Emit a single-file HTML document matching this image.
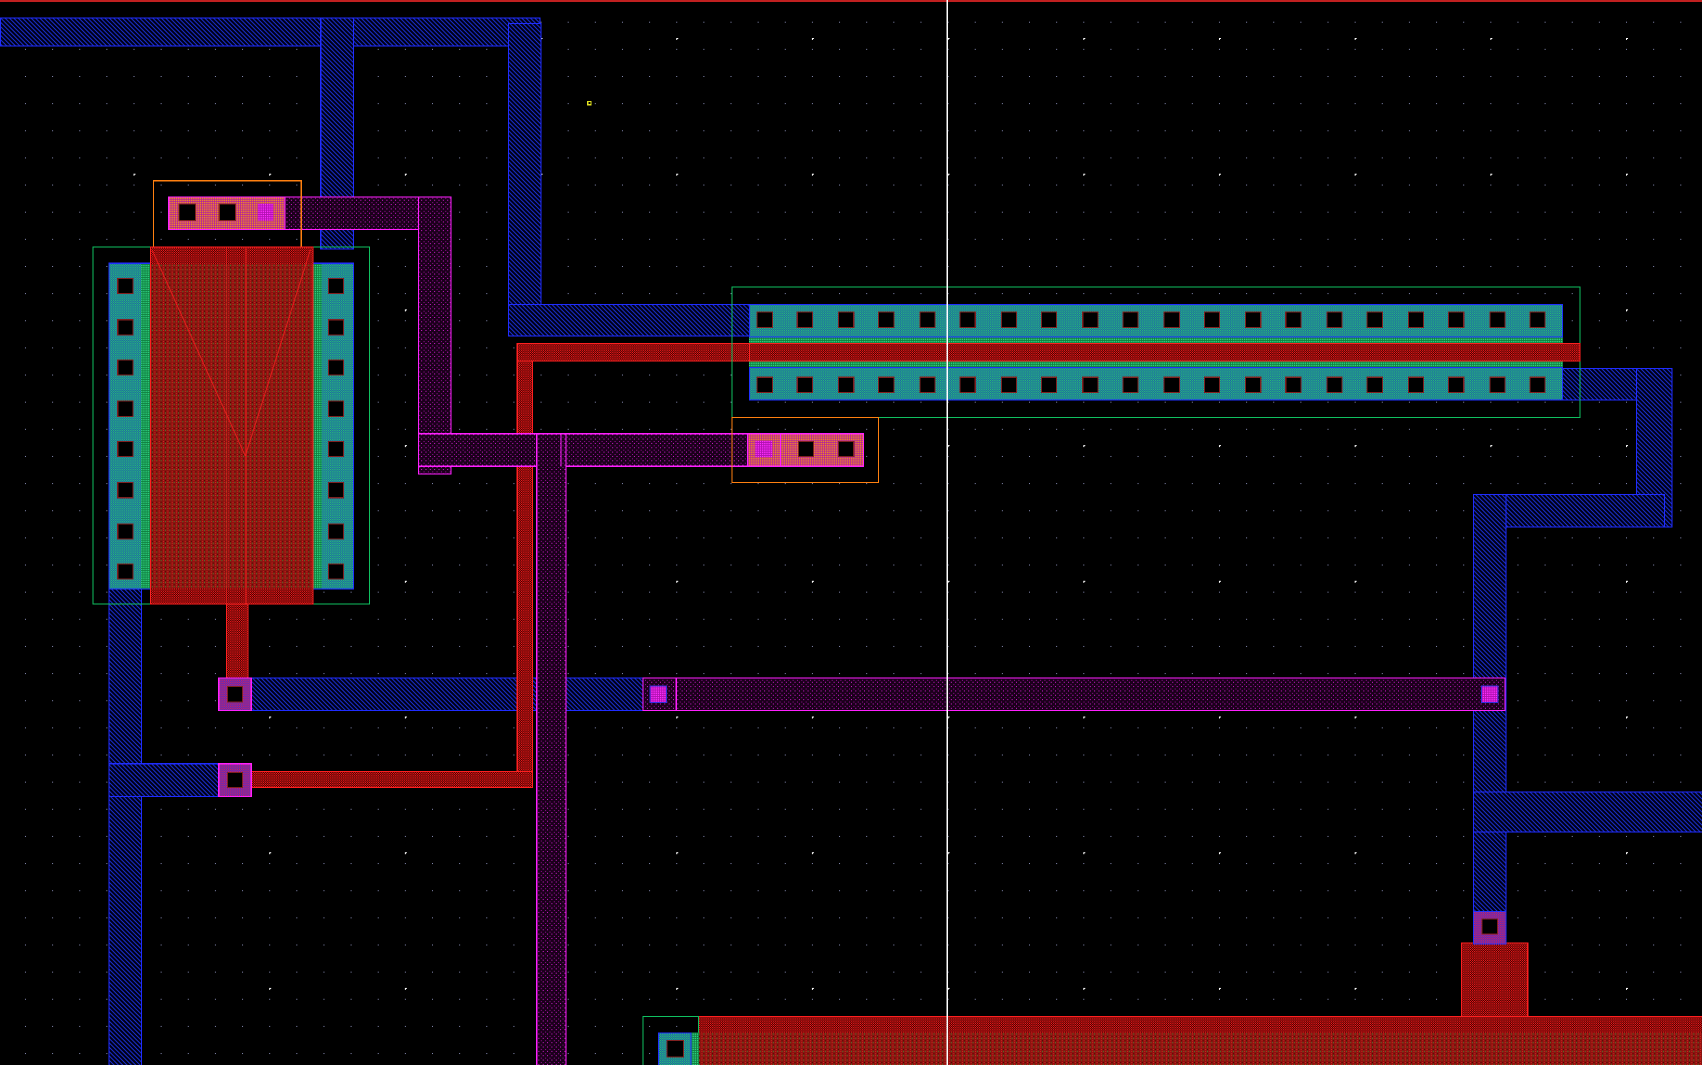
<!DOCTYPE html>
<html><head><meta charset="utf-8"><style>
html,body{margin:0;padding:0;background:#000;overflow:hidden}
svg{display:block}
</style></head><body>
<svg width="1702" height="1065" viewBox="0 0 1568 981" preserveAspectRatio="none" xmlns="http://www.w3.org/2000/svg" shape-rendering="crispEdges">
<defs>
<pattern id="dots" width="25" height="25" patternUnits="userSpaceOnUse" x="-2" y="-5"><rect x="0" y="0" width="1" height="1" fill="#8a8fb8"/></pattern>
<pattern id="bigdots" width="125" height="125" patternUnits="userSpaceOnUse" x="-2" y="-90"><rect x="-1" y="0" width="3" height="1" fill="#fff"/><rect x="0" y="-1" width="1" height="3" fill="#fff"/></pattern>
<pattern id="m1" width="4" height="4" patternUnits="userSpaceOnUse"><rect width="4" height="4" fill="#000015"/><path d="M0 0L4 4M-1 3L1 5M3 -1L5 1" stroke="#1a2fd0" stroke-width="1.2"/></pattern>
<pattern id="poly" width="2" height="2" patternUnits="userSpaceOnUse"><rect width="2" height="2" fill="#300000"/><rect width="1" height="1" fill="#f01818"/><rect x="1" y="1" width="1" height="1" fill="#f01818"/></pattern>
<pattern id="polyg" width="4" height="4" patternUnits="userSpaceOnUse"><rect width="4" height="4" fill="#8a1410"/><rect width="1" height="1" fill="#3a8a30"/><rect x="2" y="2" width="1" height="1" fill="#e02020"/><rect x="2" y="0" width="1" height="1" fill="#e02020"/><rect x="0" y="2" width="1" height="1" fill="#3a1000"/></pattern>
<pattern id="m2" width="4" height="4" patternUnits="userSpaceOnUse"><rect width="4" height="4" fill="#1a001a"/><rect width="1" height="1" fill="#e020e0"/><rect x="2" y="2" width="1" height="1" fill="#a010a0"/></pattern>
<pattern id="act" width="2" height="2" patternUnits="userSpaceOnUse"><rect width="2" height="2" fill="#1a58b0"/><rect width="1" height="1" fill="#28c070"/><rect x="1" y="1" width="1" height="1" fill="#28c070"/></pattern>
<pattern id="grn" width="2" height="2" patternUnits="userSpaceOnUse"><rect width="2" height="2" fill="#108040"/><rect width="1" height="1" fill="#30d080"/></pattern>
<pattern id="pc" width="2" height="2" patternUnits="userSpaceOnUse"><rect width="2" height="2" fill="#c02890"/><rect width="1" height="1" fill="#f09020"/><rect x="1" y="1" width="1" height="1" fill="#b03090"/></pattern>
<pattern id="via" width="2" height="2" patternUnits="userSpaceOnUse"><rect width="2" height="2" fill="#3030e0"/><rect width="1" height="1" fill="#e02050"/><rect x="1" y="1" width="1" height="1" fill="#e02050"/></pattern>
<pattern id="mv" width="2" height="2" patternUnits="userSpaceOnUse"><rect width="2" height="2" fill="#b010b0"/><rect width="1" height="1" fill="#ff30ff"/></pattern>
</defs>
<rect width="1568" height="981" fill="#000"/>
<rect width="1568" height="981" fill="url(#dots)"/>
<rect width="1568" height="981" fill="url(#bigdots)"/>
<rect x="0" y="0" width="1568" height="2" fill="#c02020"/>

<g stroke="#1f2cff" stroke-width="1" fill="url(#m1)">
<rect x="0.5" y="16.5" width="497" height="26"/>
<rect x="295.5" y="16.5" width="30" height="213"/>
<rect x="468.5" y="21.5" width="30" height="288"/>
<rect x="468.5" y="280.5" width="222" height="29"/>
<rect x="100.5" y="542.5" width="30" height="440"/>
<rect x="100.5" y="703.5" width="131" height="30"/>
<rect x="201.5" y="624.5" width="421" height="30"/>
<rect x="1439.5" y="339.5" width="101" height="29"/>
<rect x="1507.5" y="339.5" width="33" height="146"/>
<rect x="1357.5" y="455.5" width="176" height="30"/>
<rect x="1357.5" y="455.5" width="30" height="414"/>
<rect x="1357.5" y="729.5" width="212" height="37"/>
</g>

<g stroke="#ff2020" stroke-width="1" fill="url(#poly)">
<rect x="476.5" y="316.5" width="14" height="409"/>
<rect x="476.5" y="316.5" width="214" height="16"/>
<rect x="231.5" y="710.5" width="259" height="15"/>
<rect x="208.5" y="556.5" width="20" height="69"/>
<rect x="1346.5" y="868.5" width="61" height="68"/>
<rect x="643.5" y="936.5" width="926" height="50"/>
</g>
<rect x="644" y="951" width="924" height="30" fill="url(#polyg)"/>

<g stroke="#ff20ff" stroke-width="1" fill="url(#m2)">
<rect x="262.5" y="181.5" width="152" height="30"/>
<rect x="385.5" y="181.5" width="30" height="255"/>
<rect x="385.5" y="399.5" width="304" height="30"/>
<rect x="494.5" y="399.5" width="27" height="583"/>
<rect x="592.5" y="624.5" width="794" height="30"/>
</g>
<rect x="516.5" y="399.5" width="1" height="30" fill="#ff20ff"/>
<rect x="622.5" y="624.5" width="1" height="30" fill="#ff20ff"/>

<rect x="85.5" y="227.5" width="255" height="329" fill="none" stroke="#10c060"/>
<rect x="141.5" y="166.5" width="136" height="61" fill="none" stroke="#ff8010"/>
<rect x="100.5" y="242.5" width="38" height="300" fill="url(#act)" stroke="#2030ff"/>
<rect x="288.5" y="242.5" width="37" height="300" fill="url(#act)" stroke="#2030ff"/>
<rect x="130" y="243" width="8" height="299" fill="url(#grn)"/>
<rect x="288" y="243" width="8" height="299" fill="url(#grn)"/>
<rect x="138.5" y="227.5" width="150" height="329" fill="url(#polyg)" stroke="#ff2020"/>
<rect x="139" y="228" width="149" height="15" fill="url(#poly)"/>
<rect x="139" y="542" width="149" height="14" fill="url(#poly)"/>
<line x1="226.5" y1="228" x2="226.5" y2="556" stroke="#ff2020"/>
<line x1="208.5" y1="228" x2="208.5" y2="556" stroke="#ff2020" stroke-opacity=".5"/>
<path d="M140 230L226 420M286 230L226 420" stroke="#ff2020" stroke-width="1" stroke-opacity=".7" fill="none" shape-rendering="auto"/>
<rect x="155.5" y="181.5" width="107" height="30" fill="url(#pc)" stroke="#ff20ff"/>
<rect x="237" y="188" width="15" height="15" fill="url(#mv)"/>
<rect x="165" y="188" width="15" height="15" fill="#000" stroke="#802020"/>
<rect x="202" y="188" width="15" height="15" fill="#000" stroke="#802020"/>
<g fill="#000" stroke="#802020">
<rect x="108.5" y="256.5" width="14" height="14"/><rect x="302.5" y="256.5" width="14" height="14"/>
<rect x="108.5" y="294.5" width="14" height="14"/><rect x="302.5" y="294.5" width="14" height="14"/>
<rect x="108.5" y="331.5" width="14" height="14"/><rect x="302.5" y="331.5" width="14" height="14"/>
<rect x="108.5" y="369.5" width="14" height="14"/><rect x="302.5" y="369.5" width="14" height="14"/>
<rect x="108.5" y="406.5" width="14" height="14"/><rect x="302.5" y="406.5" width="14" height="14"/>
<rect x="108.5" y="444.5" width="14" height="14"/><rect x="302.5" y="444.5" width="14" height="14"/>
<rect x="108.5" y="482.5" width="14" height="14"/><rect x="302.5" y="482.5" width="14" height="14"/>
<rect x="108.5" y="519.5" width="14" height="14"/><rect x="302.5" y="519.5" width="14" height="14"/>
</g>

<rect x="201.5" y="624.5" width="30" height="30" fill="url(#via)" stroke="#ff20ff"/>
<rect x="209.5" y="632.5" width="14" height="14" fill="#000" stroke="#802020"/>
<rect x="201.5" y="703.5" width="30" height="30" fill="url(#via)" stroke="#ff20ff"/>
<rect x="209.5" y="711.5" width="14" height="14" fill="#000" stroke="#802020"/>
<rect x="599" y="632" width="15" height="15" fill="url(#mv)" stroke="#3030e0"/>
<rect x="1365" y="632" width="15" height="15" fill="url(#mv)" stroke="#3030e0"/>
<rect x="1357.5" y="839.5" width="30" height="30" fill="url(#via)" stroke="#2030ff"/>
<rect x="1365.5" y="846.5" width="14" height="14" fill="#000" stroke="#802020"/>

<rect x="674.5" y="264.5" width="781" height="120" fill="none" stroke="#10c060"/>
<rect x="690" y="310" width="750" height="28" fill="url(#grn)"/>
<rect x="690.5" y="280.5" width="749" height="30" fill="url(#act)" stroke="#2030ff"/>
<rect x="690.5" y="338.5" width="749" height="30" fill="url(#act)" stroke="#2030ff"/>
<rect x="690.5" y="316.5" width="765" height="16" fill="url(#poly)" stroke="#ff2020"/>
<g id="ct" fill="#000" stroke="#802020">
<rect x="697.5" y="287.5" width="14" height="14"/><rect x="734.5" y="287.5" width="14" height="14"/><rect x="772.5" y="287.5" width="14" height="14"/><rect x="809.5" y="287.5" width="14" height="14"/><rect x="847.5" y="287.5" width="14" height="14"/><rect x="884.5" y="287.5" width="14" height="14"/><rect x="922.5" y="287.5" width="14" height="14"/><rect x="959.5" y="287.5" width="14" height="14"/><rect x="997.5" y="287.5" width="14" height="14"/><rect x="1034.5" y="287.5" width="14" height="14"/><rect x="1072.5" y="287.5" width="14" height="14"/><rect x="1109.5" y="287.5" width="14" height="14"/><rect x="1147.5" y="287.5" width="14" height="14"/><rect x="1184.5" y="287.5" width="14" height="14"/><rect x="1222.5" y="287.5" width="14" height="14"/><rect x="1259.5" y="287.5" width="14" height="14"/><rect x="1297.5" y="287.5" width="14" height="14"/><rect x="1334.5" y="287.5" width="14" height="14"/><rect x="1372.5" y="287.5" width="14" height="14"/><rect x="1409.5" y="287.5" width="14" height="14"/>
</g>
<use href="#ct" y="60"/>

<rect x="674.5" y="384.5" width="135" height="60" fill="none" stroke="#ff8010"/>
<rect x="688.5" y="399.5" width="107" height="30" fill="url(#pc)" stroke="#ff20ff"/>
<rect x="718.5" y="399.5" width="1" height="30" fill="#ff20ff"/>
<rect x="696" y="406" width="15" height="15" fill="url(#mv)"/>
<rect x="735.5" y="406.5" width="14" height="14" fill="#000" stroke="#802020"/>
<rect x="772.5" y="406.5" width="14" height="14" fill="#000" stroke="#802020"/>

<rect x="592.5" y="936.5" width="51" height="50" fill="none" stroke="#10c060"/>
<rect x="606.5" y="951.5" width="30" height="35" fill="url(#act)" stroke="#2030ff"/>
<rect x="637" y="951" width="7" height="30" fill="url(#grn)"/>
<rect x="614.5" y="958.5" width="15" height="15" fill="#000" stroke="#802020"/>

<rect x="541.5" y="93.5" width="3" height="3" fill="none" stroke="#e0e020"/>
<rect x="872" y="0" width="1.5" height="981" fill="#fff"/>
</svg>
</body></html>
